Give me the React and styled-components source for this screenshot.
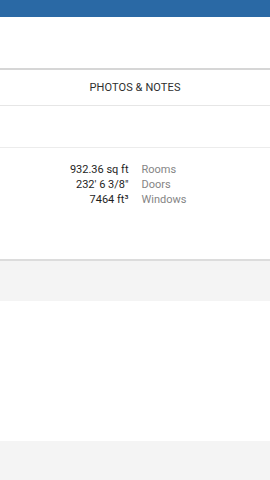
import { Fragment } from "react";
import styled, { createGlobalStyle } from "styled-components";

const GlobalStyle = createGlobalStyle`
  html, body {
    margin: 0;
    padding: 0;
    background: #f4f4f4;
  }
  body {
    font-family: Roboto, "Liberation Sans", sans-serif;
  }
`;

const Screen = styled.div`
  width: 270px;
  height: 480px;
  display: flex;
  flex-direction: column;
  background: #f4f4f4;
  overflow: hidden;
`;

const TopBar = styled.div`
  height: 17px;
  background: #2a69a5;
  flex-shrink: 0;
`;

const Block = styled.div`
  background: ${(p) => (p.$gray ? "#f4f4f4" : "#ffffff")};
  height: ${(p) => p.$h}px;
  border-bottom: ${(p) => p.$border || "none"};
  flex-shrink: 0;
`;

const TabRow = styled.div`
  height: 35px;
  background: #fff;
  border-bottom: 1px solid #e6e6e6;
  display: flex;
  align-items: center;
  justify-content: center;
  font-size: 11px;
  color: #2e2e2e;
  letter-spacing: 0.1px;
  flex-shrink: 0;
`;

const StatsPanel = styled.div`
  height: 97px;
  background: #fff;
  border-bottom: 2px solid #dcdcdc;
  padding-top: 14px;
  flex-shrink: 0;
`;

const StatsGrid = styled.div`
  display: grid;
  grid-template-columns: 1fr 1fr;
  column-gap: 13px;
  font-size: 11px;
  line-height: 15px;
`;

const Value = styled.div`
  text-align: right;
  color: #1e1e1e;
`;

const Label = styled.div`
  color: #858585;
`;

const stats = [
  ["932.36 sq ft", "Rooms"],
  ["232' 6 3/8\"", "Doors"],
  ["7464 ft³", "Windows"],
];

export default function App() {
  return (
    <>
      <GlobalStyle />
      <Screen>
        <TopBar />
        <Block $h={51} $border="2px solid #d6d6d6" />
        <TabRow>PHOTOS &amp; NOTES</TabRow>
        <Block $h={41} $border="1px solid #ececec" />
        <StatsPanel>
          <StatsGrid>
            {stats.map(([v, l]) => (
              <Fragment key={l}>
                <Value>{v}</Value>
                <Label>{l}</Label>
              </Fragment>
            ))}
          </StatsGrid>
        </StatsPanel>
        <Block $gray $h={40} />
        <Block $h={140} />
      </Screen>
    </>
  );
}
